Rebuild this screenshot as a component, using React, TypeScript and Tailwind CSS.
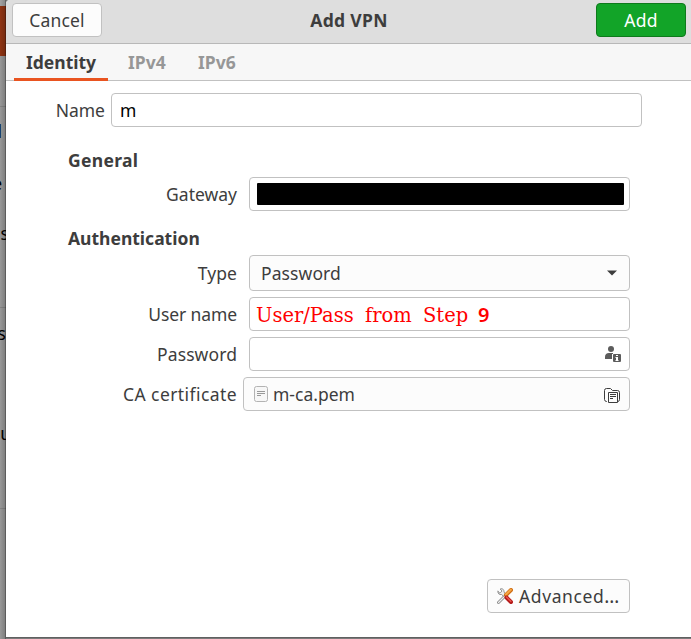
import type { ReactNode } from "react";

const field = "box-border flex items-center rounded-[4px] border border-[#c1c1c1]";

function Label({ children, className = "" }: { children: ReactNode; className?: string }) {
  return <span className={`block shrink-0 whitespace-nowrap text-right ${className}`}>{children}</span>;
}

function BackgroundStrip() {
  return (
    <div className="relative h-[639px] w-[6px] shrink-0 overflow-hidden bg-[#999999] text-[17.5px] leading-[24px] text-black">
      <div className="h-[6px] bg-[#a3a3a3]" />
      <div className="h-[50px] bg-[#8f3413]" />
      <div className="h-[50px]" />
      <div className="h-px bg-[#858585]" />
      <div className="mt-[12px] flex h-[24px] w-[2px] justify-end">l</div>
      <div className="mt-[28px] flex h-[24px] w-[2px] justify-end">e</div>
      <div className="mt-[26px] flex h-[24px] w-[9px] justify-end">as</div>
      <div className="mt-[62px] h-px bg-[#858585]" />
      <div className="mt-[13px] flex h-[24px] w-[6px] justify-end">s</div>
      <div className="mt-[76px] flex h-[24px] w-[11px] justify-end">u</div>
      <div className="mt-[63px] h-px bg-[#858585]" />
      <div className="absolute inset-0 bg-linear-to-r from-black/0 to-black/20" />
      <div className="absolute inset-y-0 right-0 w-px bg-black/25" />
    </div>
  );
}

function CaretIcon() {
  return (
    <svg className="mr-[12px] h-[6px] w-[10px]" viewBox="0 0 10 6" fill="#3d3d3d">
      <path d="M0 .5h10L5 5.5z" />
    </svg>
  );
}

function UserInfoIcon() {
  return (
    <svg className="mr-[8px] size-4" viewBox="0 0 16 16" fill="#5c5c5c">
      <ellipse cx="6" cy="3" rx="3" ry="3" />
      <path d="M0 13v-2c0-2.500 1.500-4 4-4h4v1H7v5z" />
      <path fillRule="evenodd" d="M9 8h6a1 1 0 0 1 1 1v6a1 1 0 0 1-1 1H9a1 1 0 0 1-1-1V9a1 1 0 0 1 1-1zM11 9v1h2V9zM10.500 11v1h.5v2h-.5v1h3v-1H13v-3z" />
    </svg>
  );
}

function FolderIcon() {
  return (
    <svg className="mt-[3px] mr-[8px] h-4 w-[17px]" viewBox="0 0 17 16" fill="none" stroke="#3d3d3d">
      <path d="M3 13.500h-.500q-2-.2-2-2v-9q0-2 2-2h4l2 2h5q2 0 2 2v7q0 1.700-1.500 2" />
      <path d="M4.500 4.500h9v10h-9z" />
      <path d="M6 6.500h6M6 8.500h6M6 10.500h3" />
    </svg>
  );
}

function DocumentIcon() {
  return (
    <svg className="ml-[10px] h-4 w-[14px] shrink-0" viewBox="0 0 14 16" fill="#f7f7f7" stroke="#b3b3b3">
      <rect x=".5" y=".5" width="13" height="15" rx="2" />
      <path d="M3 5.500h8M3 7.500h8M3 9.500h4" stroke="#999999" />
    </svg>
  );
}

function ToolsIcon() {
  return (
    <svg className="size-4 shrink-0" viewBox="0 0 16 16" fill="none" strokeLinecap="round">
      <path d="M1.500 14.500 8 8" stroke="#777777" strokeWidth="2.800" />
      <path d="M1.500 14.500 8 8" stroke="#eeeeee" strokeWidth="1.400" />
      <path d="M1 3.500 3 5.200 5 3 3.200 1c2-1 4 .5 3.800 3l1.500 2-2 2.200-2-1.700C2.500 7 .300 5.500 1 3.500z" fill="#eeeeee" stroke="#7b7b7b" strokeWidth=".8" />
      <path d="M9 7 14 2" stroke="#ce6b13" strokeWidth="4" />
      <path d="M9 6.500 13.800 1.700" stroke="#f5a643" strokeWidth="2.200" />
      <path d="m9.500 9.500 4.500 4.500" stroke="#b31919" strokeWidth="4" />
      <path d="m9.500 9 4.300 4.300" stroke="#eb514a" strokeWidth="1.500" />
    </svg>
  );
}

export default function App() {
  return (
    <div className="flex h-[639px] w-[691px] overflow-hidden bg-[#777777] font-['Noto_Sans','Open_Sans',sans-serif] text-[17.5px] leading-[24px] text-[#3d3d3d]">
      <BackgroundStrip />
      <div className="flex h-[639px] w-[685px] flex-col">
        <main className="flex h-[637px] flex-col rounded-tl-[4px] bg-white">
          <header className="flex h-[44px] shrink-0 items-start justify-between rounded-tl-[4px] border-b border-[#b8b8b8] bg-[#dedede] pt-[3px] pr-[5px] pl-[6px]">
            <button className={`${field} h-[34px] w-[90px] justify-center bg-[#fcfcfc]`}>
              <span className="tracking-[0.2px]">Cancel</span>
            </button>
            <h1 className="mt-[5px] font-bold tracking-[0.3px]">Add VPN</h1>
            <button className="flex h-[34px] w-[90px] items-center justify-center rounded-[4px] border border-[#0e7a1c] bg-[#12a428] tracking-[0.3px] text-white">
              Add
            </button>
          </header>
          <nav className="flex h-[37px] shrink-0 border-b border-[#c1c1c1] bg-[#f7f7f7] pl-[8px] font-bold text-[#979797]">
            <div className="h-[37px] w-[94px] border-b-[3px] border-[#e95420] pt-[6px] pl-[12px] text-[#3d3d3d]">Identity</div>
            <div className="w-[70px] pt-[6px] pl-[20px]">IPv4</div>
            <div className="w-[70px] pt-[6px] pl-[20px]">IPv6</div>
          </nav>
          <div className="mt-[12px] flex h-[34px] shrink-0 items-center">
            <Label className="w-[99px]">Name</Label>
            <div className={`${field} ml-[6px] h-[34px] w-[531px] bg-white pl-[8px] text-black`}>m</div>
          </div>
          <h2 className="mt-[21px] ml-[62px] font-bold tracking-[0.3px]">General</h2>
          <div className="mt-[5px] flex h-[34px] shrink-0 items-center">
            <Label className="w-[231px]">Gateway</Label>
            <div className={`${field} ml-[12px] h-[34px] w-[381px] bg-white pl-[7px]`}>
              <div className="h-[22px] w-[367px] rounded-[1px] bg-black" />
            </div>
          </div>
          <h2 className="mt-[15px] ml-[62px] font-bold">Authentication</h2>
          <div className="mt-[5px] flex shrink-0 flex-col gap-[6px]">
            <div className="flex h-[36px] items-center">
              <Label className="w-[231px] tracking-[0.1px]">Type</Label>
              <div className={`${field} ml-[12px] h-[36px] w-[381px] justify-between bg-[#fcfcfc] pl-[11px]`}>
                <span className="tracking-[0.1px]">Password</span>
                <CaretIcon />
              </div>
            </div>
            <div className="flex h-[34px] items-center">
              <Label className="w-[231px] tracking-[-0.1px]">User name</Label>
              <div className={`${field} ml-[12px] h-[34px] w-[381px] bg-white pt-[3px] pl-[6px] font-['DejaVu_Serif',serif] text-[19.5px] text-[#ff0000]`}>
                <span className="w-[109px]">User/Pass</span>
                <span className="w-[58px]">from</span>
                <span className="w-[55px]">Step</span>
                <span className="-mt-[2px] font-['Noto_Sans',sans-serif] text-[20px] font-semibold">9</span>
              </div>
            </div>
            <div className="flex h-[34px] items-center">
              <Label className="w-[231px] tracking-[0.1px]">Password</Label>
              <div className={`${field} ml-[12px] h-[34px] w-[381px] justify-end bg-white`}>
                <UserInfoIcon />
              </div>
            </div>
            <div className="flex h-[34px] items-center">
              <Label className="w-[231px] tracking-[0.42px]">CA certificate</Label>
              <div className={`${field} ml-[6px] h-[34px] w-[387px] bg-[#fcfcfc]`}>
                <DocumentIcon />
                <span className="ml-[5px] flex-1">m-ca.pem</span>
                <FolderIcon />
              </div>
            </div>
          </div>
          <button className={`${field} mt-[168px] ml-[481px] h-[34px] w-[143px] shrink-0 bg-[#fcfcfc] pl-[9px]`}>
            <ToolsIcon />
            <span className="ml-[6px] tracking-[0.6px]">
              Advanced<span className="text-[19px] leading-[20px]">…</span>
            </span>
          </button>
        </main>
        <footer className="h-[2px] border-t border-[#606060] bg-[#7b7b7b]" />
      </div>
    </div>
  );
}
